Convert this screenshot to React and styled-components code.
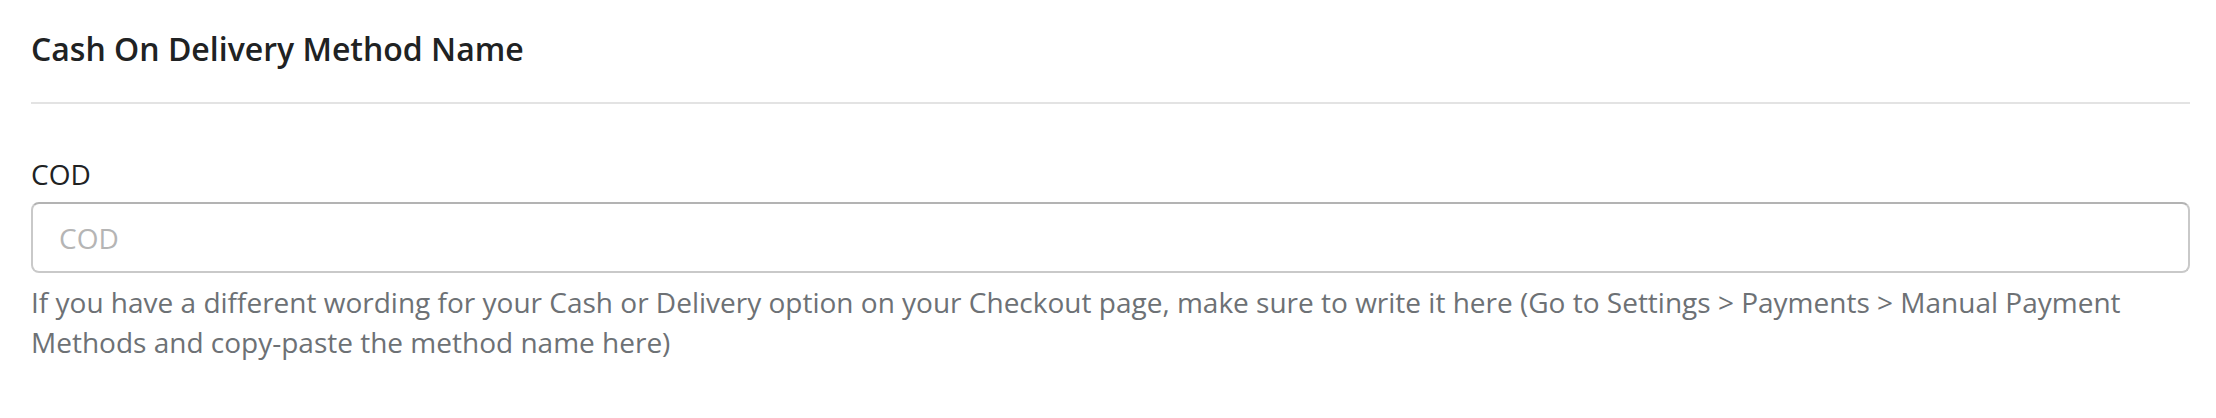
import React from 'react';
import styled, { createGlobalStyle } from 'styled-components';

const GlobalStyle = createGlobalStyle`
  body {
    margin: 0;
    background: #ffffff;
    font-family: "Open Sans", "Liberation Sans", sans-serif;
  }
`;

const Section = styled.section`
  padding: 25px 26px 0 31px;
`;

const Title = styled.h2`
  margin: 0;
  font-size: 32px;
  line-height: 48px;
  font-weight: 600;
  color: #202223;
`;

const Divider = styled.hr`
  margin: 29px 0 0;
  border: none;
  height: 2px;
  background: #e3e3e3;
`;

const Field = styled.div`
  display: flex;
  flex-direction: column;
  margin-top: 50px;
`;

const Label = styled.label`
  font-size: 28px;
  line-height: 40px;
  color: #202223;
  margin-bottom: 8px;
`;

const Input = styled.input`
  box-sizing: border-box;
  height: 71px;
  width: 100%;
  padding: 0 26px;
  border: 2px solid #c9c9c9;
  border-top-color: #b3b3b3;
  border-radius: 8px;
  font-family: inherit;
  font-size: 28px;
  color: #202223;
  outline: none;

  &::placeholder {
    color: #b5b5b5;
  }
`;

const HelpText = styled.p`
  margin: 9px 0 0;
  font-size: 28px;
  line-height: 40px;
  color: #6d7175;
`;

export default function App() {
  return (
    <>
      <GlobalStyle />
      <Section>
        <Title>Cash On Delivery Method Name</Title>
        <Divider />
        <Field>
          <Label htmlFor="cod-name">COD</Label>
          <Input id="cod-name" placeholder="COD" />
          <HelpText>
            If you have a different wording for your Cash or Delivery option on your Checkout page, make sure to
            write it here (Go to Settings &gt; Payments &gt; Manual Payment Methods and copy-paste the method name
            here)
          </HelpText>
        </Field>
      </Section>
    </>
  );
}
